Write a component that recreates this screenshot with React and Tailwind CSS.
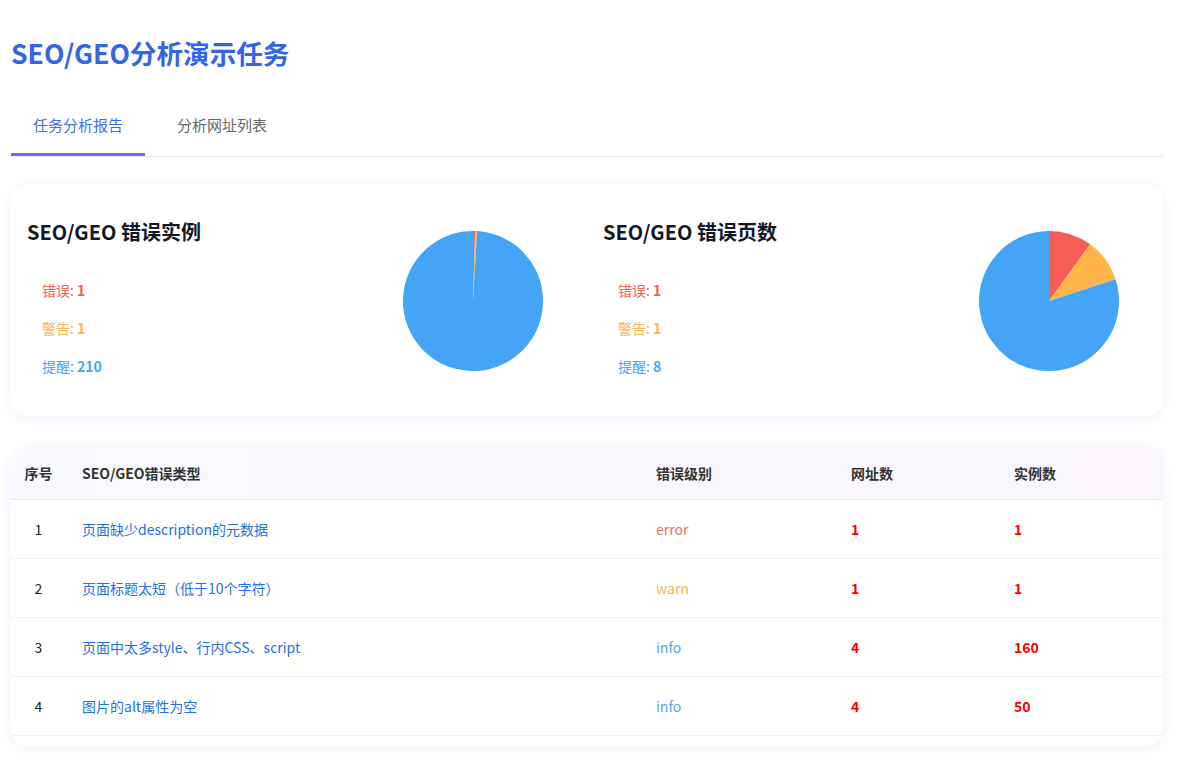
import React from 'react';

const FONT = { fontFamily: '"Noto Sans CJK SC", "Noto Sans", sans-serif' };

const COLORS = { error: '#f55d56', warn: '#ffb54c', info: '#44a5f7' };

function Pie({ values }) {
  const total = values.reduce((s, v) => s + v.value, 0);
  const r = 70;
  const cx = 70;
  const cy = 70;
  let start = 0;
  return (
    <svg width="140" height="140" viewBox="0 0 140 140">
      {values.map((v, i) => {
        const angle = (v.value / total) * Math.PI * 2;
        const end = start + angle;
        const x1 = cx + r * Math.sin(start);
        const y1 = cy - r * Math.cos(start);
        const x2 = cx + r * Math.sin(end);
        const y2 = cy - r * Math.cos(end);
        const large = angle > Math.PI ? 1 : 0;
        const d = `M${cx},${cy} L${x1},${y1} A${r},${r} 0 ${large} 1 ${x2},${y2} Z`;
        start = end;
        return <path key={i} d={d} fill={v.color} />;
      })}
    </svg>
  );
}

function ChartBlock({ title, error, warn, info }) {
  return (
    <div className="flex flex-1 items-center justify-between pl-4 pr-[44px]">
      <div className="flex flex-col self-stretch pt-[33px]">
        <h2 className="text-[20px] font-bold leading-[28px] text-[#111827]">{title}</h2>
        <ul className="mt-[32px] space-y-[14px] pl-[15px] text-[14px] leading-[24px]">
          <li className="text-[#f55d56]">错误: <b>{error}</b></li>
          <li className="text-[#ffb54c]">警告: <b>{warn}</b></li>
          <li className="text-[#44a5f7]">提醒: <b>{info}</b></li>
        </ul>
      </div>
      <Pie
        values={[
          { value: error, color: COLORS.error },
          { value: warn, color: COLORS.warn },
          { value: info, color: COLORS.info },
        ]}
      />
    </div>
  );
}

const rows = [
  { id: 1, name: '页面缺少description的元数据', level: 'error', urls: 1, count: 1 },
  { id: 2, name: '页面标题太短（低于10个字符）', level: 'warn', urls: 1, count: 1 },
  { id: 3, name: '页面中太多style、行内CSS、script', level: 'info', urls: 4, count: 160 },
  { id: 4, name: '图片的alt属性为空', level: 'info', urls: 4, count: 50 },
];

const levelColor = {
  error: 'text-[#f56c6c]',
  warn: 'text-[#f8b655]',
  info: 'text-[#5ba3f0]',
};

const GRID = 'grid grid-cols-[55px_574px_195px_163px_1fr]';

export default function App() {
  return (
    <div className="min-h-screen bg-white pb-6 pl-[11px] pr-[15px] pt-[36px] text-[#333]" style={FONT}>
      <h1 className="text-[26.6px] font-bold leading-[34px] text-[#3366e6]">SEO/GEO分析演示任务</h1>

      <div className="mt-[42px] flex gap-[10px] border-b border-[#e5e7eb]">
        <button className="border-b-[3px] border-[#8b5cf6] px-[22px] pb-[17px] pt-[2px] text-[15px] leading-[22px] text-[#3b6ee8]">
          任务分析报告
        </button>
        <button className="border-b-[3px] border-transparent px-[22px] pb-[17px] pt-[2px] text-[15px] leading-[22px] text-[#666]">
          分析网址列表
        </button>
      </div>

      <section className="mt-[28px] flex h-[231px] rounded-2xl bg-white shadow-[0_2px_14px_rgba(70,100,240,0.09)]">
        <ChartBlock title="SEO/GEO 错误实例" error={1} warn={1} info={210} />
        <ChartBlock title="SEO/GEO 错误页数" error={1} warn={1} info={8} />
      </section>

      <section className="mt-[31px] overflow-hidden rounded-2xl bg-white pb-[10px] shadow-[0_2px_14px_rgba(70,100,240,0.09)]">
        <div className={`${GRID} h-[53px] items-center border-b border-[#e5e7eb] bg-gradient-to-r from-[#f8f9fe] to-[#faf5fe] text-[14px] font-bold text-[#333]`}>
          <div className="text-center">序号</div>
          <div className="pl-4">SEO/GEO错误类型</div>
          <div className="pl-4">错误级别</div>
          <div className="pl-4">网址数</div>
          <div className="pl-4">实例数</div>
        </div>
        {rows.map((r) => (
          <div key={r.id} className={`${GRID} h-[59px] items-center border-b border-[#f0f0f0] text-[14px]`}>
            <div className="text-center text-[#222]">{r.id}</div>
            <div className="pl-4 text-[#1f6fe5]">{r.name}</div>
            <div className={`pl-4 ${levelColor[r.level]}`}>{r.level}</div>
            <div className="pl-4 font-bold text-[#ff0000]">{r.urls}</div>
            <div className="pl-4 font-bold text-[#ff0000]">{r.count}</div>
          </div>
        ))}
      </section>
    </div>
  );
}
